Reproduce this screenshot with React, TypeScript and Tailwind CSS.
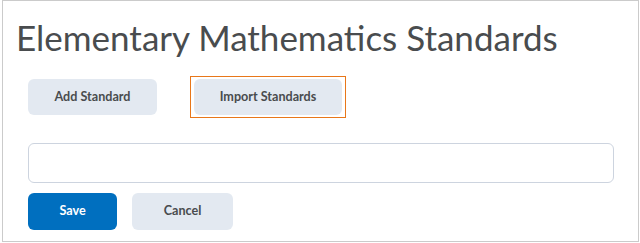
import React from "react";

export default function App() {
  return (
    <div className="w-[640px] h-[243px] bg-white" style={{ fontFamily: "Lato, 'Open Sans', sans-serif" }}>
      <div className="ml-[2px] w-[637px] h-[242px] border border-[#cbcbcb] bg-white">
        <h1 className="pt-[16px] pl-[13px] text-[35px] leading-[40px] font-normal text-[#494c4e]">
          Elementary Mathematics Standards
        </h1>
        <div className="mt-[19px] flex items-center pl-[25px] h-[42px]">
          <button className="h-[36px] w-[129px] rounded-[6px] bg-[#e3e9f1] text-[12.6px] font-bold text-[#494c4e]">
            Add Standard
          </button>
          <div className="ml-[33px] border border-[#e8771a] px-[3px] py-[2px]">
            <button className="block h-[36px] w-[148px] rounded-[6px] bg-[#e3e9f1] text-[12.6px] font-bold text-[#494c4e]">
              Import Standards
            </button>
          </div>
        </div>
        <div className="mt-[25px] pl-[25px]">
          <input
            type="text"
            className="block h-[40px] w-[586px] rounded-[6px] border border-[#cdd4df] bg-white outline-none"
          />
        </div>
        <div className="mt-[10px] flex gap-[15px] pl-[25px]">
          <button className="h-[37px] w-[89px] rounded-[6px] bg-[#006fbf] text-[12.6px] font-bold text-white">
            Save
          </button>
          <button className="h-[37px] w-[101px] rounded-[6px] bg-[#e3e9f1] text-[12.6px] font-bold text-[#494c4e]">
            Cancel
          </button>
        </div>
      </div>
    </div>
  );
}
